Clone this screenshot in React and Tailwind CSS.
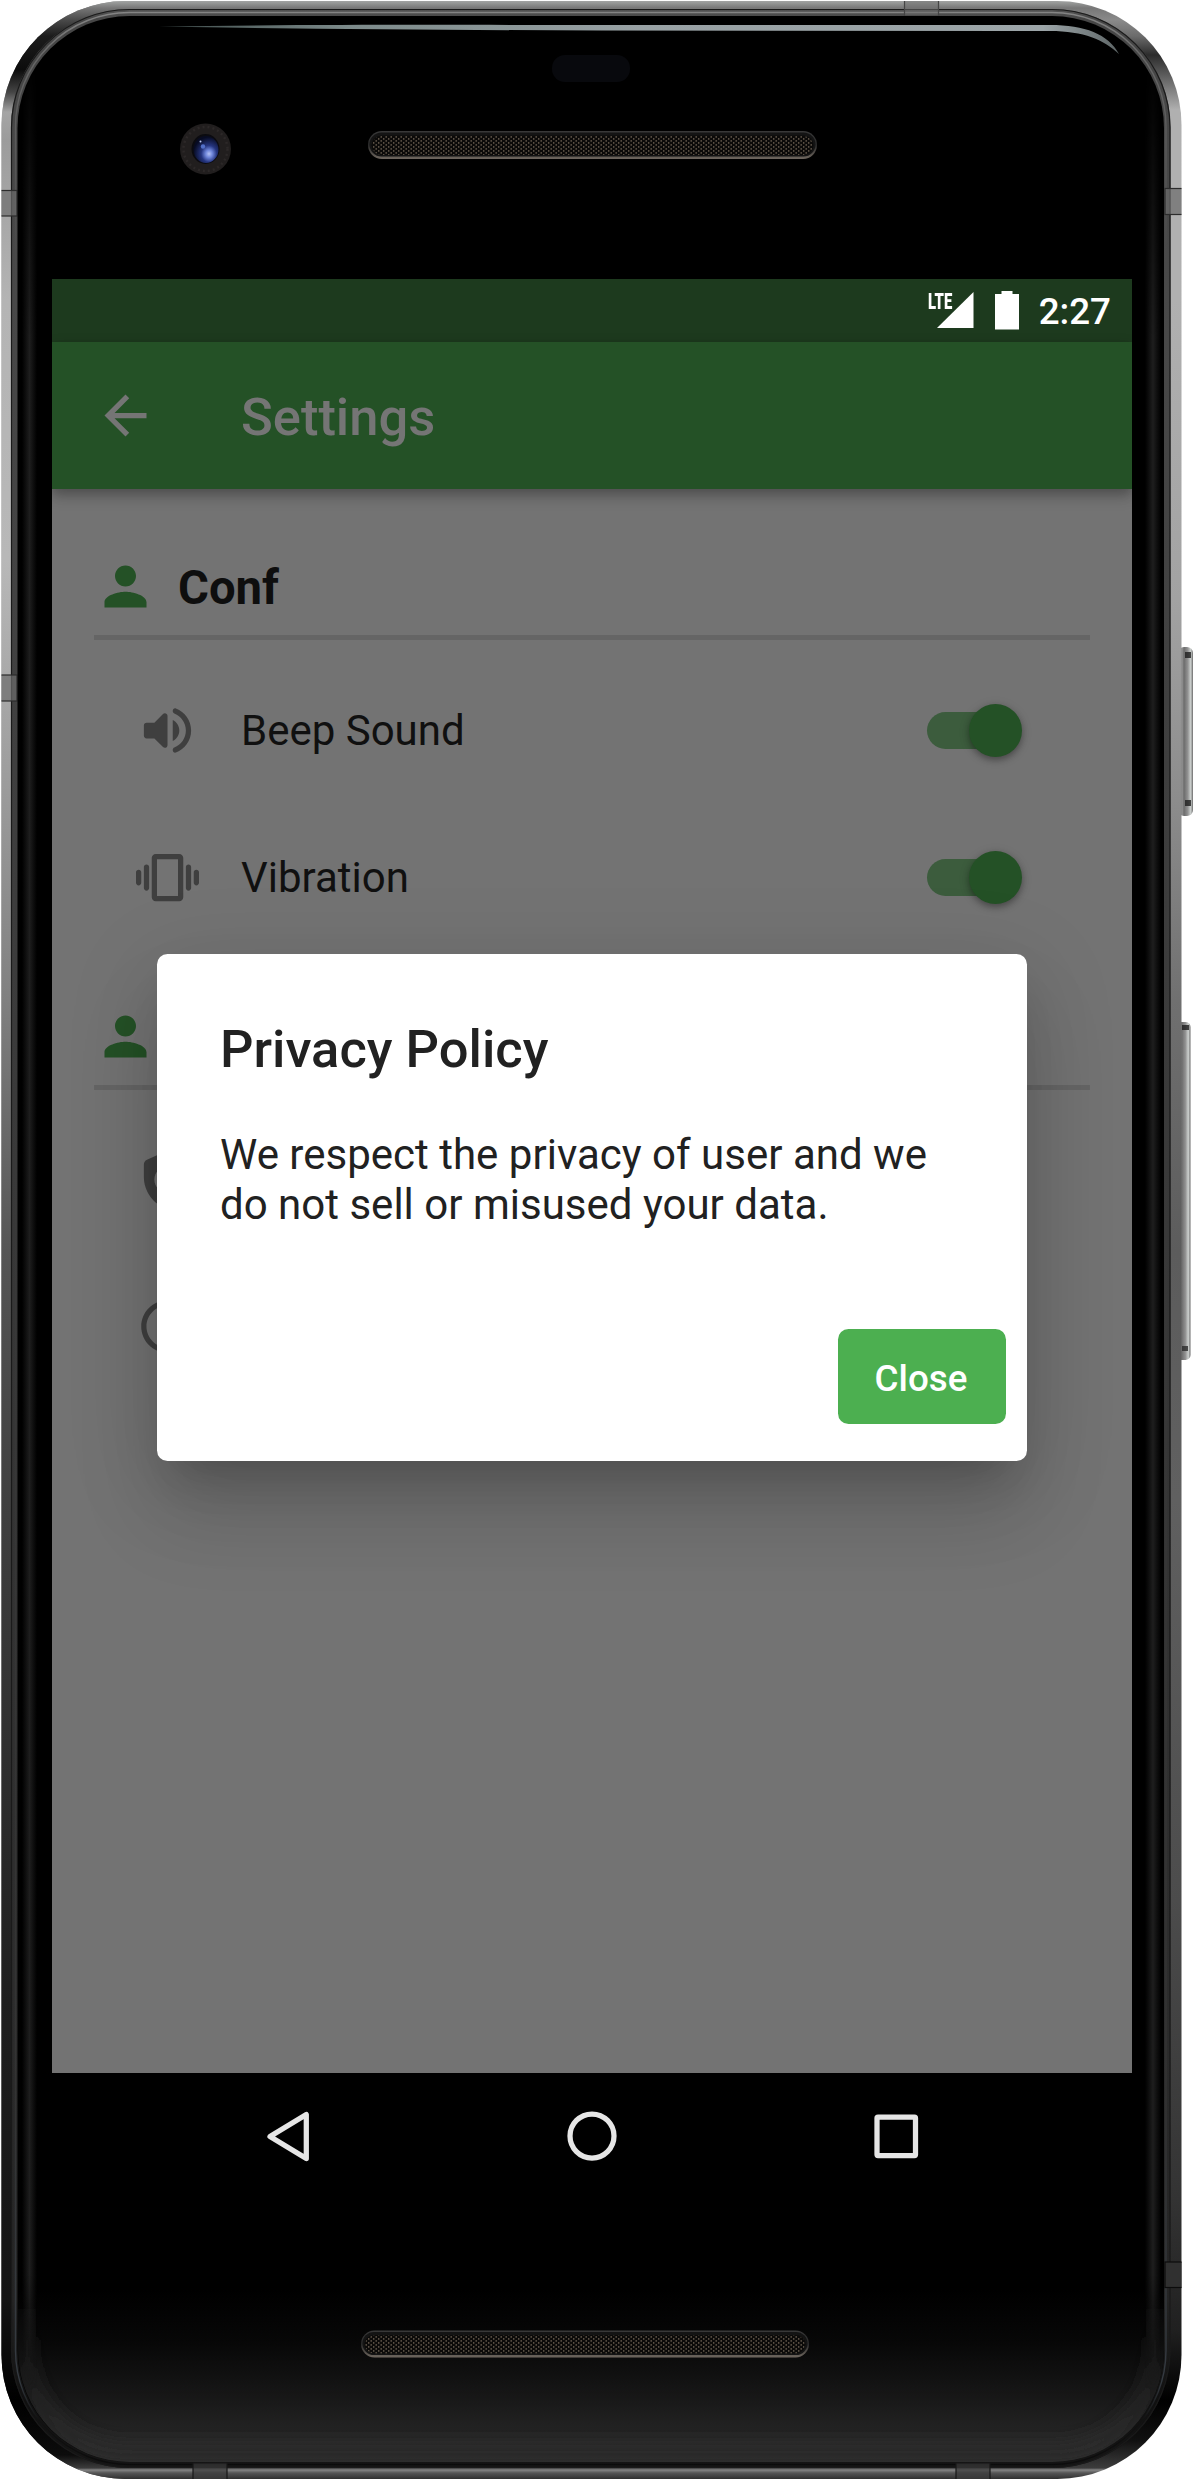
import React from "react";

function Metal({ id, stops }) {
  return (
    <linearGradient id={id} gradientUnits="userSpaceOnUse" x1="0" y1="0" x2="0" y2="2480">
      {stops.map(([y, c]) => (
        <stop key={y} offset={y / 2480} stopColor={c} />
      ))}
    </linearGradient>
  );
}

function Grille({ x, y, w, h }) {
  return (
    <g>
      <rect x={x} y={y} width={w} height={h} rx={h / 2} fill="url(#lip)" />
      <rect x={x + 1.5} y={y + 1.5} width={w - 3} height={h - 4} rx={h / 2 - 2} fill="#141414" />
      <rect x={x + 3.5} y={y + 4.5} width={w - 7} height={h - 8.5} rx={h / 2 - 4} fill="#0b0a09" />
      <rect x={x + 4} y={y + 5} width={w - 8} height={h - 9} rx={h / 2 - 4.5} fill="url(#mesh)" />
    </g>
  );
}

/* The handset: metal rim, side keys, glass, camera and speakers. */
function PhoneBody() {
  return (
    <svg className="absolute inset-0" width="1194" height="2480" viewBox="0 0 1194 2480" aria-hidden="true">
      <defs>
        <Metal
          id="metalL"
          stops={[
            [0, "#a8aaa9"], [8, "#777777"], [20, "#4a4a4a"], [36, "#1c1c1c"], [70, "#0c0c0c"], [92, "#444444"],
            [112, "#a5a5a5"], [140, "#9c9c9c"], [300, "#b4b4b4"], [560, "#b8b8b8"], [800, "#9a9a9a"], [1000, "#808080"],
            [1250, "#555555"], [1500, "#404040"], [2000, "#1f1f1f"], [2300, "#141414"], [2400, "#000000"],
            [2455, "#0c0c0c"], [2468, "#3c3c3c"], [2470, "#858585"], [2473, "#555555"], [2479, "#303030"],
          ]}
        />
        <Metal
          id="metalR"
          stops={[
            [0, "#a8aaa9"], [8, "#777777"], [20, "#8a8a8a"], [36, "#6c6c6c"], [55, "#2c2c2c"], [75, "#5c5c5c"],
            [110, "#b0b0b0"], [300, "#b0b0b0"], [600, "#a2a2a2"], [800, "#8c8c8c"], [1000, "#707070"],
            [1250, "#5c5c5c"], [1500, "#606060"], [1900, "#4c4c4c"], [2200, "#333333"], [2330, "#202020"], [2400, "#000000"],
            [2440, "#101010"], [2468, "#3c3c3c"], [2470, "#858585"], [2473, "#555555"], [2479, "#303030"],
          ]}
        />
        <Metal
          id="rim"
          stops={[
            [0, "#5e5e5e"], [20, "#464646"], [300, "#484848"], [700, "#404040"], [1500, "#343434"], [2050, "#2b2b2b"],
            [2300, "#242424"], [2400, "#101010"], [2480, "#161616"],
          ]}
        />
        <Metal
          id="rimLight"
          stops={[[0, "#8c8c8c"], [60, "#666666"], [250, "#4a4a4a"], [900, "#3c3c3c"], [2100, "#333333"], [2380, "#343a41"], [2420, "#111111"], [2480, "#0a0a0a"]]}
        />
        <linearGradient id="sheenL" x1="0" y1="0" x2="1" y2="0">
          <stop offset="0" stopColor="#1c1c1c" stopOpacity="0" />
          <stop offset="0.5" stopColor="#1e1e1e" />
          <stop offset="1" stopColor="#1c1c1c" stopOpacity="0" />
        </linearGradient>
        <linearGradient id="sheenFade" x1="0" y1="0" x2="0" y2="1">
          <stop offset="0" stopColor="#ffffff" stopOpacity="0" />
          <stop offset="0.12" stopColor="#ffffff" />
          <stop offset="0.95" stopColor="#ffffff" />
          <stop offset="1" stopColor="#ffffff" stopOpacity="0" />
        </linearGradient>
        <mask id="sheenMask" maskUnits="userSpaceOnUse" x="0" y="60" width="1194" height="2330">
          <rect x="0" y="60" width="1194" height="2330" fill="url(#sheenFade)" />
        </mask>
        <linearGradient id="floor" x1="0" y1="0" x2="0" y2="1">
          <stop offset="0" stopColor="#000000" />
          <stop offset="0.3" stopColor="#070707" />
          <stop offset="0.62" stopColor="#171717" />
          <stop offset="1" stopColor="#2e2e2e" />
        </linearGradient>
        <linearGradient id="cornerGlow" gradientUnits="userSpaceOnUse" x1="0" y1="2290" x2="0" y2="2440">
          <stop offset="0" stopColor="#222222" stopOpacity="0" />
          <stop offset="1" stopColor="#2a2a2a" />
        </linearGradient>
        <linearGradient id="glare" gradientUnits="userSpaceOnUse" x1="159" y1="0" x2="1120" y2="0">
          <stop offset="0" stopColor="#3d4b4a" />
          <stop offset="0.2" stopColor="#7d8b8b" />
          <stop offset="0.5" stopColor="#98a1a4" />
          <stop offset="0.92" stopColor="#9ca5a8" />
          <stop offset="1" stopColor="#5d6566" />
        </linearGradient>
        <linearGradient id="lip" x1="0" y1="0" x2="0" y2="1">
          <stop offset="0" stopColor="#393939" />
          <stop offset="0.5" stopColor="#2a2a2a" />
          <stop offset="1" stopColor="#6f675f" />
        </linearGradient>
        <pattern id="mesh" width="5" height="4" patternUnits="userSpaceOnUse">
          <rect x="0.5" y="0" width="1.4" height="1.8" fill="#5a5044" />
          <rect x="3" y="2" width="1.4" height="1.8" fill="#5a5044" />
        </pattern>
        <linearGradient id="key" x1="0" y1="0" x2="1" y2="0">
          <stop offset="0" stopColor="#747474" />
          <stop offset="0.3" stopColor="#8a8a8a" />
          <stop offset="0.4" stopColor="#6c6c6c" />
          <stop offset="0.65" stopColor="#929292" />
          <stop offset="0.85" stopColor="#cdd1cf" />
          <stop offset="1" stopColor="#6a6a6a" />
        </linearGradient>
        <radialGradient id="lens" cx="0.62" cy="0.66" r="0.62">
          <stop offset="0" stopColor="#b4c2f5" />
          <stop offset="0.22" stopColor="#6f86da" />
          <stop offset="0.5" stopColor="#25357f" />
          <stop offset="1" stopColor="#070b22" />
        </radialGradient>
        <clipPath id="left"><rect x="0" y="0" width="590" height="2480" /></clipPath>
        <clipPath id="body"><rect x="1.5" y="1" width="1180" height="2478" rx="124" /></clipPath>
        <clipPath id="glass"><rect x="18" y="16" width="1146" height="2446" rx="112" /></clipPath>
        <filter id="soft" filterUnits="userSpaceOnUse" x="0" y="2200" width="1194" height="280"><feGaussianBlur stdDeviation="8" /></filter>
      </defs>

      <rect x="1178" y="647" width="15" height="169" rx="6" fill="url(#key)" />
      <rect x="1185" y="652" width="6" height="6" fill="#1d1d1d" fillOpacity="0.8" />
      <rect x="1185" y="800" width="6" height="6" fill="#1d1d1d" fillOpacity="0.8" />
      <rect x="1176" y="1022" width="14.5" height="338" rx="5" fill="url(#key)" />
      <rect x="1182" y="1025" width="7" height="5" fill="#1d1d1d" fillOpacity="0.8" />
      <rect x="1182" y="1346" width="6" height="5" fill="#2a2a2a" fillOpacity="0.8" />

      <rect x="1.5" y="1" width="1180" height="2478" rx="124" fill="url(#metalR)" />
      <rect x="1.5" y="1" width="1180" height="2478" rx="124" fill="url(#metalL)" clipPath="url(#left)" />
      <rect x="11" y="9" width="1159.5" height="2459" rx="118" fill="url(#rim)" />
      <rect x="11.5" y="9.5" width="1158.5" height="2458" rx="118" fill="none" stroke="#1a1a1a" strokeWidth="1.2" />
      <rect x="15.5" y="12.5" width="1150.5" height="2452" rx="114" fill="none" stroke="url(#rimLight)" strokeWidth="1.4" />

      {/* antenna bands */}
      <g clipPath="url(#body)" stroke="#2c2c2c" strokeWidth="1.2" fill="#6c6c6c">
        <rect x="-4" y="190.5" width="21" height="25.5" fillOpacity="0.7" />
        <rect x="-4" y="675" width="21" height="26" fillOpacity="0.7" />
        <rect x="1165" y="188.5" width="22" height="26" fillOpacity="0.7" />
        <rect x="904.5" y="-4" width="34" height="20" fillOpacity="0.5" stroke="#444444" />
        <rect x="1165" y="2262" width="22" height="25.5" fill="#303030" stroke="#0c0c0c" />
        <rect x="193" y="2463" width="34" height="22" fill="#3a3a3a" fillOpacity="0.7" stroke="#181818" />
        <rect x="956" y="2463" width="34" height="22" fill="#3a3a3a" fillOpacity="0.7" stroke="#181818" />
      </g>

      <rect x="17.5" y="16" width="1146.5" height="2446" rx="112" fill="#000000" />
      <g clipPath="url(#glass)">
        <rect x="18" y="2290" width="1146" height="172" fill="url(#floor)" />
        <path d="M27 2290V2350A100 100 0 0 0 127 2452H1055A100 100 0 0 0 1155 2350V2290" fill="none" stroke="url(#cornerGlow)" strokeWidth="18" filter="url(#soft)" />
        <g mask="url(#sheenMask)">
          <rect x="22" y="60" width="15" height="2330" fill="url(#sheenL)" />
          <rect x="1145" y="60" width="16" height="2330" fill="url(#sheenL)" />
        </g>
      </g>

      <path
        d="M159 26.500 C330 24 480 25 600 25 L1050 25 C1085 25 1108 34 1119 54 C1104 40 1084 31 1050 31 L600 30.500 C450 30 300 29 159 26.500Z"
        fill="url(#glare)"
      />
      <rect x="552" y="55" width="78" height="27" rx="13" fill="#08090d" />
      <circle cx="205.5" cy="149" r="25.5" fill="#211e1e" />
      <circle cx="205.5" cy="149" r="22" fill="none" stroke="#2c2828" strokeWidth="2.5" strokeDasharray="2 3" />
      <ellipse cx="205.5" cy="149" rx="14" ry="15" fill="#0b0b10" />
      <ellipse cx="206" cy="149.5" rx="12.5" ry="13.5" fill="url(#lens)" />
      <circle cx="203" cy="146.5" r="2.2" fill="#5370c8" />
      <circle cx="200.5" cy="141.5" r="1" fill="#b9c6f2" />
      <Grille x={368} y={131} w={449} h={28} />
      <Grille x={361} y={2330.5} w={448} h={27} />
    </svg>
  );
}

function Icon({ children, className = "" }) {
  return (
    <svg viewBox="0 0 24 24" className={"h-[63px] w-[63px] shrink-0 " + className} fill="currentColor" aria-hidden="true">
      {children}
    </svg>
  );
}

const ArrowBack = () => <path d="M20 11H7.830l5.590-5.590L12 4l-8 8 8 8 1.410-1.410L7.830 13H20v-2z" />;
const Person = () => (
  <path d="M12 12c2.210 0 4-1.790 4-4s-1.790-4-4-4-4 1.790-4 4 1.790 4 4 4zm0 2c-2.670 0-8 1.340-8 4v2h16v-2c0-2.660-5.330-4-8-4z" />
);
const Volume = () => (
  <path d="M3 10v4c0 .55.45 1 1 1h3l3.290 3.290c.63.63 1.710.18 1.710-.71V6.410c0-.89-1.080-1.340-1.710-.71L7 9H4c-.55 0-1 .45-1 1zm13.500 2c0-1.770-1.020-3.290-2.500-4.030v8.050c1.480-.73 2.500-2.250 2.500-4.020zM14 4.450v.2c0 .38.25.71.6.850C17.180 6.530 19 9.060 19 12s-1.820 5.470-4.400 6.500c-.36.14-.6.47-.6.850v.2c0 .63.63 1.070 1.210.85C18.600 19.110 21 15.840 21 12s-2.400-7.110-5.790-8.400c-.58-.23-1.210.22-1.210.850z" />
);
const Vibration = () => (
  <path d="M1 15c.55 0 1-.45 1-1v-4c0-.55-.45-1-1-1s-1 .45-1 1v4c0 .55.45 1 1 1zm3 2c.55 0 1-.45 1-1V8c0-.55-.45-1-1-1s-1 .45-1 1v8c0 .55.45 1 1 1zm18-7v4c0 .55.45 1 1 1s1-.45 1-1v-4c0-.55-.45-1-1-1s-1 .45-1 1zm-2 7c.55 0 1-.45 1-1V8c0-.55-.45-1-1-1s-1 .45-1 1v8c0 .55.45 1 1 1zM16.500 3h-9C6.670 3 6 3.670 6 4.500v15c0 .83.67 1.500 1.500 1.500h9c.83 0 1.500-.67 1.500-1.500v-15c0-.83-.67-1.500-1.500-1.500zM16 19H8V5h8v14z" />
);
const Policy = () => (
  <>
    <path d="M19.800 4.480l-7-3.120a2 2 0 0 0-1.620 0l-7 3.120C3.470 4.800 3 5.520 3 6.300V11c0 5.550 3.840 10.740 9 12 2.300-.56 4.330-1.900 5.880-3.710l-3.120-3.120c-1.940 1.290-4.580 1.070-6.290-.64-1.950-1.950-1.950-5.120 0-7.070 1.950-1.950 5.120-1.950 7.070 0 1.710 1.710 1.920 4.350.64 6.290l2.900 2.900C20.290 15.690 21 13.380 21 11V6.300c0-.79-.47-1.500-1.200-1.820z" />
    <circle cx="12" cy="12" r="3" />
  </>
);
const Info = () => (
  <path d="M11 7h2v2h-2zm0 4h2v6h-2zm1-9C6.480 2 2 6.480 2 12s4.480 10 10 10 10-4.480 10-10S17.520 2 12 2zm0 18c-4.410 0-8-3.590-8-8s3.590-8 8-8 8 3.590 8 8-3.590 8-8 8z" />
);

function Switch() {
  return (
    <div className="mr-[3px] flex h-[53px] w-[95px] items-center">
      <div className="flex h-[37px] w-[87px] items-center rounded-full bg-[#3c5c3d]">
        <div className="ml-[42px] h-[53px] w-[53px] shrink-0 rounded-full bg-[#245126] shadow-[0_3px_6px_rgba(0,0,0,0.3),0_2px_12px_rgba(0,0,0,0.12)]" />
      </div>
    </div>
  );
}

function SectionHeader({ title }) {
  return (
    <div className="mx-[42px] flex h-[106px] items-center border-b-[5px] border-[#656565] pt-[4px]">
      <Icon className="text-[#245126]"><Person /></Icon>
      <span className="ml-[21px] pt-[4px] text-[47.250px] font-bold leading-none text-[#0e0e0e]">{title}</span>
    </div>
  );
}

function Tile({ icon, label, on }) {
  return (
    <div className="flex h-[147px] items-center pl-[84px] pr-[107px]">
      <Icon className="text-[#3f3f3f]">{icon}</Icon>
      <span className="ml-[42px] flex-1 text-[42px] leading-none text-[#101010]">{label}</span>
      {on && <Switch />}
    </div>
  );
}

function StatusBar() {
  return (
    <div className="flex h-[63px] items-start justify-end bg-[#1d3a1e] pr-[21px] text-white">
      <span className="mt-[12px] w-[8.500px] origin-top-left scale-x-[0.66] text-[22.500px] font-black leading-[20px]">LTE</span>
      <svg className="mt-[13px]" width="39" height="37" viewBox="0 0 39 37" fill="currentColor" aria-hidden="true">
        <path d="M37.500 0V36H1Z" />
      </svg>
      <svg className="ml-[20px] mt-[12px]" width="24" height="39" viewBox="0 0 24 39" fill="currentColor" aria-hidden="true">
        <path d="M6.500 0h11v3H24V38.500H0V3h6.500z" />
      </svg>
      <span className="ml-[19.500px] mt-[14px] text-[36.750px] font-medium leading-[38px]">2:27</span>
    </div>
  );
}

function PrivacyDialog() {
  return (
    <div className="absolute left-[105px] top-[675px] flex h-[507px] w-[870px] flex-col rounded-[10.500px] bg-white shadow-[0_29px_40px_-18px_rgba(0,0,0,0.18),0_55px_85px_0px_rgba(0,0,0,0.12),0_20px_90px_12px_rgba(0,0,0,0.09)]">
      <h2 className="px-[63px] pt-[64px] text-[52.500px] font-medium leading-[62px] text-[#212121]">Privacy Policy</h2>
      <p className="px-[63px] pt-[50px] text-[42px] leading-[50px] tracking-[0.010px] text-[#212121]">
        We respect the privacy of user and we
        <br />
        do not sell or misused your data.
      </p>
      <button className="mb-[37px] ml-auto mr-[21px] mt-auto h-[95px] w-[168px] rounded-[10.500px] bg-[#4caf50] pr-[2px] pt-[5px] text-[36.750px] font-medium leading-none text-white">
        Close
      </button>
    </div>
  );
}

function NavBar() {
  return (
    <nav className="flex h-[126px] items-center justify-center gap-[241px] pb-[1px] pr-[2px] text-[#e6e6e6]">
      {[
        <path key="b" d="M50.300 10.500V54.500L14 32.500Z" strokeLinejoin="round" />,
        <circle key="h" cx="32" cy="32" r="22" />,
        <rect key="r" x="13" y="13" width="38.5" height="38.5" rx="1" strokeLinejoin="round" />,
      ].map((shape) => (
        <svg key={shape.key} width="63" height="63" viewBox="0 0 63 63" fill="none" stroke="currentColor" strokeWidth="5.25" aria-hidden="true">
          {shape}
        </svg>
      ))}
    </nav>
  );
}

export default function App() {
  return (
    <div className="relative h-[2480px] w-[1194px] overflow-hidden bg-white font-['Roboto',sans-serif]">
      <PhoneBody />
      <main className="relative pl-[52px] pt-[279px]">
        <div className="relative h-[1794px] w-[1080px] overflow-hidden bg-[#737373]">
          <StatusBar />
          <header className="flex h-[147px] items-center bg-[#245126] pl-[42px] text-[#757575] shadow-[0_5px_12px_rgba(0,0,0,0.3),0_10px_16px_rgba(0,0,0,0.06)]">
            <Icon><ArrowBack /></Icon>
            <h1 className="ml-[84px] pt-[3px] text-[52.500px] font-medium leading-none">Settings</h1>
          </header>
          <div className="pt-[45px]">
            <SectionHeader title="Conf" />
            <div className="pt-[17px]">
              <Tile icon={<Volume />} label="Beep Sound" on />
              <Tile icon={<Vibration />} label="Vibration" on />
            </div>
          </div>
          <div className="pt-[33px]">
            <SectionHeader title="" />
            <div className="pt-[16px]">
              <Tile icon={<Policy />} label="" />
              <Tile icon={<Info />} label="" />
            </div>
          </div>
          <PrivacyDialog />
        </div>
        <div className="w-[1080px]">
          <NavBar />
        </div>
      </main>
    </div>
  );
}
